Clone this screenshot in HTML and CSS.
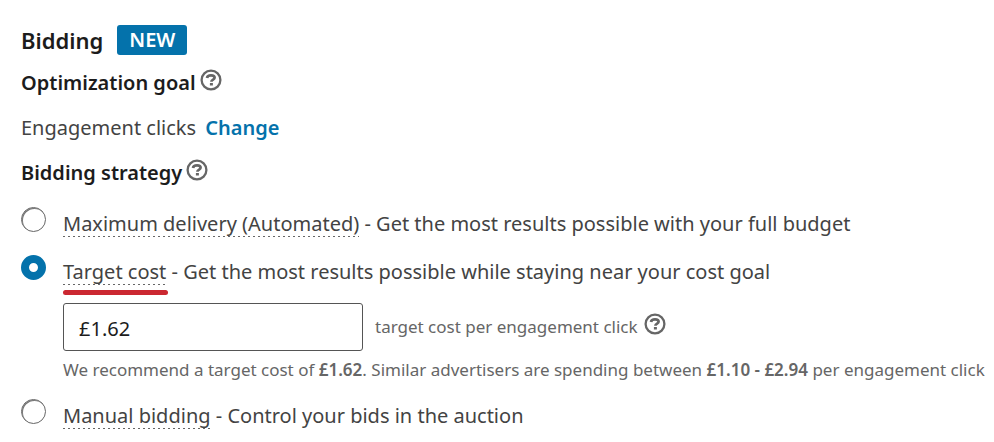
FILE: index.html
```html
<!DOCTYPE html>
<html lang="en">
<head>
<meta charset="utf-8">
<title>Bidding</title>
<link rel="stylesheet" href="styles.css">
</head>
<body>
<svg class="defs" aria-hidden="true">
  <symbol id="help" viewBox="0 0 22 22">
    <circle cx="11" cy="11" r="9.4" fill="none" stroke="currentColor" stroke-width="2.3"/>
    <path d="M7 9C7.3 7.1 8.9 6.4 11 6.4c2.3 0 3.6.9 3.6 2.4 0 1.9-3.2 1.7-3.2 4" fill="none" stroke="currentColor" stroke-width="2.7"/>
    <rect x="9.9" y="14" width="3" height="2.5" fill="currentColor"/>
  </symbol>
</svg>
<form class="bidding">
  <header class="title-row">
    <h1 class="title">Bidding</h1>
    <span class="badge">NEW</span>
  </header>
  <h2 class="heading">Optimization goal <svg class="help"><use href="#help"/></svg></h2>
  <p class="goal">Engagement clicks <a class="change" href="#goal">Change</a></p>
  <h2 class="heading">Bidding strategy <svg class="help"><use href="#help"/></svg></h2>
  <div class="options">
    <div class="option">
      <input class="radio" type="radio" name="strategy" id="max">
      <label for="max"><span class="term">Maximum delivery (Automated)</span> - Get the most results possible with your full budget</label>
    </div>
    <div class="option">
      <input class="radio" type="radio" name="strategy" id="target" checked>
      <label for="target"><span class="term marked">Target cost</span> - Get the most results possible while staying near your cost goal</label>
    </div>
    <div class="details">
      <div class="field">
        <input class="amount" type="text" id="amount" value="£1.62">
        <label class="unit" for="amount">target cost per engagement click</label>
        <svg class="help"><use href="#help"/></svg>
      </div>
      <p class="hint">We recommend a target cost of <b>£1.62</b>. Similar advertisers are spending between <b>£1.10 - £2.94</b> per engagement click</p>
    </div>
    <div class="option">
      <input class="radio" type="radio" name="strategy" id="manual">
      <label for="manual"><span class="term">Manual bidding</span> - Control your bids in the auction</label>
    </div>
  </div>
</form>
</body>
</html>
```
FILE: styles.css
```css
* { box-sizing: border-box; }
body { margin: 0; background: #fff; color: #434343; font: 20px/28px "Noto Sans", "Open Sans", sans-serif; }
h1, h2, p { margin: 0; }
.defs { display: none; }
.bidding { padding: 24px 0 0 21px; }
.title-row { display: flex; align-items: center; gap: 14px; height: 32px; }
.title { font-size: 22px; font-weight: 600; color: #1c1c1c; }
.badge { padding: 1px 12px; border-radius: 3px; background: #0472ab; color: #fff; font-size: 20px; font-weight: 600; }
.heading { display: flex; align-items: center; gap: 4px; height: 28px; margin-top: 13px; font-size: 20px; font-weight: 600; color: #1c1c1c; }
.help { width: 22px; height: 22px; flex: none; margin-bottom: 6px; color: #666; }
.goal { margin-top: 17px; }
.change { margin-left: 4px; color: #0472ab; font-weight: 600; text-decoration: none; }
.goal + .heading { margin-top: 17px; }
.options { margin-top: 20px; }
.option { display: flex; gap: 17px; height: 48px; white-space: nowrap; }
.option label { padding-top: 3px; }
.radio { appearance: none; flex: none; width: 25px; height: 25px; margin: 0; border: 1px solid #666; border-radius: 50%; background: #fff; box-shadow: inset 1px 1px 0 #777; }
.radio:checked { border: 8px solid #0472ab; box-shadow: none; }
.term { background: repeating-linear-gradient(90deg, #666 0 2px, transparent 2px 5px) left bottom / 100% 1px no-repeat; }
.term.marked { position: relative; }
.term.marked::after { content: ""; position: absolute; left: 0; right: -2px; bottom: -10px; height: 5px; border-radius: 3px; background: #cb2831; }
.details { padding-left: 42px; height: 96px; }
.field { display: flex; align-items: center; gap: 6px; }
.amount { width: 300px; height: 48px; padding: 2px 15px 0; margin-right: 6px; border: 1px solid #555; border-radius: 3px; background: #fff; color: #1c1c1c; font: inherit; }
.unit, .hint { color: #666; font-size: 17px; white-space: nowrap; }
.hint { margin-top: 5px; }
.hint b { font-weight: 600; }
```
